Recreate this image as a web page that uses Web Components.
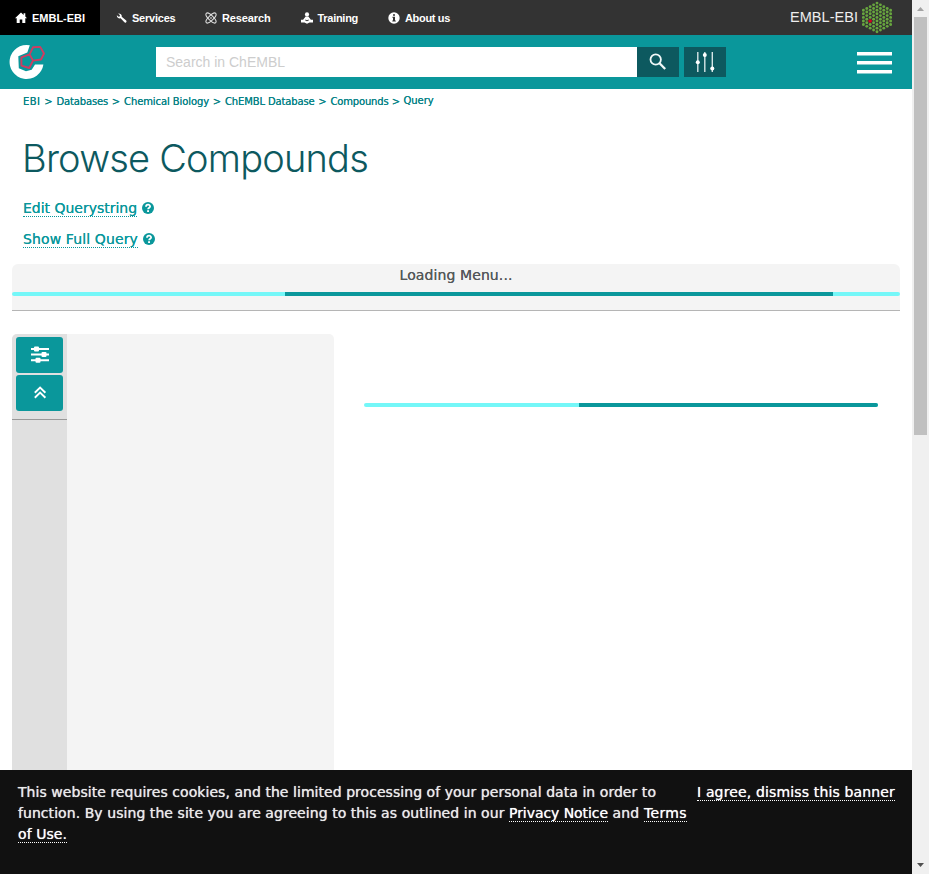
<!DOCTYPE html>
<html lang="en">
<head>
<meta charset="utf-8">
<title>Browse Compounds</title>
<style>
html,body{margin:0;height:100%;overflow:hidden;background:#fff}
body{font-family:"DejaVu Sans",sans-serif;font-size:14px}
</style>
</head>
<body>
<chembl-app></chembl-app>
<script>
const define = (name, html, ready) => customElements.define(name, class extends HTMLElement {
  connectedCallback() {
    if (this.shadowRoot) return;
    const t = document.createElement('template');
    t.innerHTML = html;
    this.attachShadow({mode: 'open'}).append(t.content.cloneNode(true));
    if (ready) ready(this, this.shadowRoot);
  }
});

// A run of text tracked to occupy the width given in "w".
define('fit-text', `<style>:host{display:inline-block;white-space:pre}</style><slot></slot>`, el => {
  const n = el.textContent.length, w = +el.getAttribute('w');
  const natural = el.getBoundingClientRect().width;
  el.style.letterSpacing = ((w - natural) / n).toFixed(4) + 'px';
  el.style.width = w + 'px';
});

const icons = {
  home: '<path fill="#fff" d="M6 .5 0 6.2h1.7V11h3V7.5h2.6V11h3V6.2H12L10.3 4.5V1.3H8.6v1.6z"/>',
  wrench: '<path fill="#fff" d="M3.2 1.6C5 1.2 7.2 2.6 6.7 4.7L11.2 8.5C12.2 9.8 10.7 11.3 9.4 10.3L5.6 6.3C3.8 6.9 1.5 5.4 1.9 3.3L3.6 4.8 5 4.2 4.8 3z"/>',
  atom: '<g fill="none" stroke="#ddd" stroke-width="1.1"><ellipse cx="6" cy="6" rx="6.6" ry="2.4" transform="rotate(45 6 6)"/><ellipse cx="6" cy="6" rx="6.6" ry="2.4" transform="rotate(-45 6 6)"/></g><circle cx="6" cy="6" r=".8" fill="#fff"/>',
  training: '<circle cx="6" cy="2.4" r="2.1" fill="#fff"/><path fill="#fff" d="M4.6 4.5h2.8l2.5 3.3H12V10.4H8.5L6 11.8 3.5 10.4H0V7.8h2.1z"/><path fill="#333" d="M4.3 7.4 6 8.2l1.7-.8v1L6 9.2l-1.7-.8z"/>',
  info: '<circle cx="6" cy="6" r="5.7" fill="#fff"/><path fill="#333" d="M5 2.2h2v1.6H5zM4.4 4.8H7v3.8h.8v1H4.3v-1H5V5.8h-.6z"/>',
  help: '<circle cx="6" cy="6" r="6" fill="#0a979b"/><path d="M4 4.7C4 2.1 8.1 2.1 8.1 4.5 8.1 5.8 6.2 5.7 6.1 7.2" fill="none" stroke="#fff" stroke-width="1.8"/><rect x="5.1" y="8.2" width="1.9" height="1.8" fill="#fff"/>'
};
define('ui-icon', `<style>:host{display:block;width:12px;height:12px;flex:none}svg{display:block}</style><svg width="12" height="12" viewBox="0 0 12 12"></svg>`,
  (el, r) => { r.querySelector('svg').innerHTML = icons[el.getAttribute('name')]; });

define('nav-item', `<style>:host{display:flex;align-items:center;height:35px;font:bold 11px/35px "Liberation Sans",sans-serif;color:#fff;box-sizing:border-box}
ui-icon{margin-right:5px}.t{height:35px;line-height:37px}</style><ui-icon></ui-icon><span class="t"><slot></slot></span>`, (el, r) => {
  const old = r.querySelector('ui-icon'), i = document.createElement('ui-icon');
  i.setAttribute('name', el.getAttribute('icon')); old.replaceWith(i);
});

define('embl-logo', `<style>:host{display:flex;align-items:center;height:35px;color:#eee;font:14.5px/35px "Liberation Sans",sans-serif}svg{margin-left:4px;display:block}</style>
<fit-text w="68">EMBL-EBI</fit-text><svg width="30" height="35"></svg>`, (el, r) => {
  let s = '';
  for (let c = -4; c <= 4; c++) {
    const n = 9 - Math.abs(c);
    for (let k = 0; k < n; k++) {
      const red = c === -2 && k === 4;
      s += `<circle cx="${15 + c * 3.4}" cy="${17.4 + (k - (n - 1) / 2) * 3.58}" r="${red ? 1.8 : 1.45}" fill="${red ? '#d5001f' : '#68a63f'}"/>`;
    }
  }
  r.querySelector('svg').innerHTML = s;
});

define('top-nav', `<style>:host{display:flex;height:35px;background:#333}
.on{background:#000;width:100px;padding-left:15px}embl-logo{margin-left:auto;margin-right:20px}</style>
<nav-item class="on" icon="home"><fit-text w="53">EMBL-EBI</fit-text></nav-item>
<nav-item icon="wrench" style="margin-left:15px"><fit-text w="43.5">Services</fit-text></nav-item>
<nav-item icon="atom" style="margin-left:29.5px"><fit-text w="48.5">Research</fit-text></nav-item>
<nav-item icon="training" style="margin-left:30px"><fit-text w="40.5">Training</fit-text></nav-item>
<nav-item icon="info" style="margin-left:30px"><fit-text w="45">About us</fit-text></nav-item>
<embl-logo></embl-logo>`);

define('search-header', `<style>:host{display:flex;height:54px;background:#0a979b;align-items:center;box-sizing:border-box}
svg{display:block}.logo{margin-left:9px}
.box{margin-left:107px;width:481px;height:30px;background:#fff;color:#cdcdcd;font:14px/30px "Liberation Sans",sans-serif;padding-left:10px;box-sizing:border-box}
.b{width:42px;height:30px;background:#0d595f}.b+.b{margin-left:5px}
.menu{margin-left:auto;margin-right:20px;width:35px;display:grid;gap:5px;margin-top:1px}.menu i{height:3px;background:#fff;border-bottom:1px solid #85cbcd}</style>
<svg class="logo" width="40" height="40" viewBox="0 0 40 40"><path d="M20.8 3.3A17 17 0 1 0 34.4 22.4L26 22.4 22.7 27.8 17 29.3 9.8 26.3 9.3 14.2 18.3 10.4Z" fill="#fff"/>
<path d="M20.6 12.4 24 5.3l7.2-.4 3.8 6.6-3 6-8 1.1zL12.4 15.3v8.3l7.8 2.4 3.8-7.4" fill="none" stroke="#cf3d61" stroke-width="1.9" stroke-linejoin="round"/></svg>
<div class="box"><fit-text w="119">Search in ChEMBL</fit-text></div>
<div class="b"><svg width="42" height="30" fill="none" stroke="#f0f8f8"><circle cx="18.7" cy="12.5" r="5.2" stroke-width="1.8"/><path d="m22.5 16.3 5.7 5.7" stroke-width="2.3"/></svg></div>
<div class="b"><svg width="42" height="30"><path d="M13.8 5v20M20.8 5v20M28.3 5v20" stroke="#d5e5e6" stroke-width="1.4"/><g fill="#fff"><circle cx="13.8" cy="15.2" r="2"/><circle cx="20.8" cy="8" r="2"/><circle cx="28.3" cy="21.5" r="2"/></g></svg></div>
<div class="menu"><i></i><i></i><i></i></div>`);

define('bread-crumbs', `<style>:host{display:flex;height:14px;font-size:10px;line-height:14px;color:#0a8387;text-shadow:0 0 .4px #0a8387}i{font-style:normal;width:16px;text-align:center}.q{margin-top:-1px}</style>
<fit-text w="17.5">EBI</fit-text><i>&gt;</i><fit-text w="51.5">Databases</fit-text><i>&gt;</i><fit-text w="85">Chemical Biology</fit-text><i>&gt;</i><fit-text w="89.5">ChEMBL Database</fit-text><i>&gt;</i><fit-text w="58">Compounds</fit-text><i style="width:15px">&gt;</i><fit-text class="q" w="30">Query</fit-text>`);

define('query-link', `<style>:host{display:flex;align-items:center;gap:5px;height:16px;color:#0a979b;font-size:14px;text-shadow:0 0 .5px #0a979b}.t{border-bottom:1px dotted #0a979b;height:16px;line-height:17px}</style>
<span class="t"><slot></slot></span><ui-icon name="help"></ui-icon>`);

define('progress-bar', `<style>:host{display:flex;height:4px;border-radius:2px;overflow:hidden;background:#74f7f8}i{background:#0a979b}</style><i></i>`, (el, r) => {
  const i = r.querySelector('i');
  i.style.marginLeft = el.getAttribute('from') + 'px';
  i.style.width = el.getAttribute('size') + 'px';
});

define('menu-loader', `<style>:host{display:block;height:47px;box-sizing:border-box;background:#f4f4f4;border-bottom:1px solid #b5b5b5;border-radius:6px 6px 0 0;color:#54585a;text-align:center;text-shadow:0 0 .4px #54585a}
.t{height:28px;line-height:22px}</style><div class="t"><fit-text w="113">Loading Menu...</fit-text></div><progress-bar from="273" size="548"></progress-bar>`);

define('filter-panel', `<style>:host{display:flex;width:322px;background:#f4f4f4;border-radius:5px 5px 0 0;overflow:hidden}
.rail{width:55px;background:#e0e0e0}.top{display:grid;gap:2px;padding:3px 4px 8px;border-bottom:1px solid #999}
.b{width:47px;height:36px;border-radius:3px;background:#0a979b}svg{display:block}</style>
<div class="rail"><div class="top">
<div class="b"><svg width="47" height="36"><path d="M15 12h18M15 17.5h18M15 23.3h18" stroke="#fff" stroke-width="2"/><g fill="#fff"><rect x="18" y="9.5" width="5" height="5" rx="1"/><rect x="25.5" y="15" width="5" height="5" rx="1"/><rect x="19.5" y="20.8" width="5" height="5" rx="1"/></g></svg></div>
<div class="b"><svg width="47" height="36" fill="none" stroke="#fff" stroke-width="1.9"><path d="m18.8 17.8 5.3-5.2 5.3 5.2M18.8 22.8l5.3-5.2 5.3 5.2"/></svg></div>
</div></div>`);

define('cookie-banner', `<style>:host{display:flex;height:104px;box-sizing:border-box;background:#111;color:#e9e9e9;padding:12px 17px 0 18px;justify-content:space-between;line-height:21px;font-size:14px;text-shadow:0 0 .7px #e9e9e9}
.l{display:flex;height:21px}a{display:block;height:18px;line-height:21px;border-bottom:1px dotted #fff;color:#fff}</style>
<div><div class="l"><fit-text w="638">This website requires cookies, and the limited processing of your personal data in order to</fit-text></div>
<div class="l"><fit-text w="491">function. By using the site you are agreeing to this as outlined in our </fit-text><a><fit-text w="99">Privacy Notice</fit-text></a><fit-text w="36"> and </fit-text><a><fit-text w="43">Terms</fit-text></a></div>
<div class="l"><a><fit-text w="49">of Use.</fit-text></a></div></div>
<a><fit-text w="198">I agree, dismiss this banner</fit-text></a>`);

define('side-scrollbar', `<style>:host{display:flex;flex-direction:column;width:17px;background:#f0f0f0}svg{display:block;flex:none}.thumb{height:418px;width:13px;margin-left:2px;background:#c0c0c0}.g{flex:1}</style>
<svg width="17" height="17"><path d="M5 11h7L8.5 7z" fill="#a3a3a3"/></svg><div class="thumb"></div><div class="g"></div><svg width="17" height="17"><path d="M5 6h7l-3.5 4z" fill="#505050"/></svg>`);

define('chembl-app', `<style>:host{display:flex;width:929px;height:874px}
.page{width:912px;display:flex;flex-direction:column}main{flex:1;min-height:0;display:flex;flex-direction:column;overflow:hidden}
.head{height:175px;padding:6px 23px 0;box-sizing:border-box}
h1{margin:24px 0 0 -1px;height:50px;font:300 38px/50px Inter,"Liberation Sans",sans-serif;color:#0d595f}
.one{margin-top:17px}.two{margin-top:15px}
menu-loader{margin:0 12px}.body{display:flex;flex:1;margin:23px 12px 0}
.results{margin:69px 0 0 30px;width:514px}</style>
<div class="page"><top-nav></top-nav><search-header></search-header><main>
<div class="head"><bread-crumbs></bread-crumbs><h1><fit-text w="346">Browse Compounds</fit-text></h1>
<query-link class="one"><fit-text w="114">Edit Querystring</fit-text></query-link>
<query-link class="two"><fit-text w="115">Show Full Query</fit-text></query-link></div>
<menu-loader></menu-loader>
<div class="body"><filter-panel></filter-panel><progress-bar class="results" from="215" size="299"></progress-bar></div>
</main><cookie-banner></cookie-banner></div><side-scrollbar></side-scrollbar>`);
</script>
</body>
</html>
